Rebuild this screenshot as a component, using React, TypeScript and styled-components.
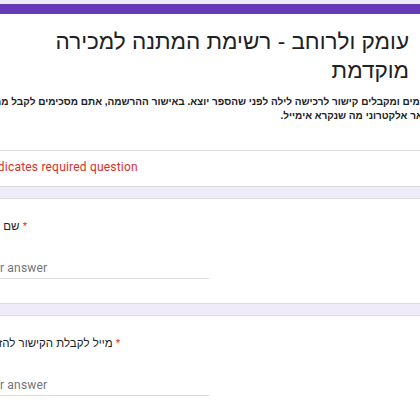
import React from 'react';
import styled, { createGlobalStyle } from 'styled-components';

const HEBREW = '"Liberation Sans", "DejaVu Sans", Arial, sans-serif';
const LATIN = 'Roboto, "Liberation Sans", Arial, sans-serif';

const GlobalStyle = createGlobalStyle`
  html, body {
    margin: 0;
    padding: 0;
    background: #f0ebf8;
    overflow: hidden;
  }
`;

const Page = styled.div`
  width: 420px;
  height: 420px;
  overflow: hidden;
  padding-top: 4px;
  box-sizing: border-box;
`;

// the form column is wider than the window, so both sides are cut
const FormColumn = styled.div`
  margin-left: -46px;
  width: 510px;
  display: flex;
  flex-direction: column;
  gap: 11px;
`;

const Card = styled.div`
  background: #ffffff;
  border: 1px solid #dadce0;
  border-radius: 8px;
  overflow: hidden;
`;

const HeaderCard = styled(Card)`
  border-top: none;
`;

const AccentBar = styled.div`
  height: 10px;
  background: #673ab7;
`;

const Title = styled.h1`
  margin: 0;
  padding: 13px 54px 0 24px;
  direction: rtl;
  text-align: right;
  white-space: nowrap;
  font-family: ${HEBREW};
  font-weight: 400;
  font-size: 22.5px;
  line-height: 29px;
  color: #202124;
`;

const Description = styled.div`
  margin-top: 10px;
  padding: 0 25px 0 24px;
  direction: rtl;
  text-align: right;
  white-space: nowrap;
  font-family: ${HEBREW};
  font-weight: 700;
  font-size: 10px;
  line-height: 14px;
  color: #202124;
`;

const Divider = styled.hr`
  margin: 27px 0 0;
  border: none;
  border-top: 1px solid #dadce0;
`;

const RequiredNote = styled.div`
  padding: 8px 24px 11px;
  font-family: ${LATIN};
  font-size: 12px;
  line-height: 16px;
  letter-spacing: 0.2px;
  color: #d93025;
`;

const QuestionCard = styled(Card)`
  padding: 18px 24px 24px;
  display: flex;
  flex-direction: column;
  gap: 25px;
`;

const Label = styled.div`
  font-family: ${HEBREW};
  font-size: 11.5px;
  line-height: 18px;
  color: #202124;
`;

const Star = styled.span`
  color: #d93025;
`;

const AnswerInput = styled.input`
  width: 50%;
  box-sizing: border-box;
  border: none;
  border-bottom: 1px solid #dadce0;
  outline: none;
  padding: 0 0 2px;
  background: transparent;
  font-family: ${LATIN};
  font-size: 12px;
  line-height: 16px;
  letter-spacing: 0.2px;
  color: #202124;

  &::placeholder {
    color: #70757a;
  }
`;

const questions = ['שם מלא', 'מייל לקבלת הקישור להזמנה'];

function Question({ label }: { label: string }) {
  return (
    <QuestionCard>
      <Label>
        {label}
        <Star> *</Star>
      </Label>
      <AnswerInput placeholder="Your answer" />
    </QuestionCard>
  );
}

export default function App() {
  return (
    <Page>
      <GlobalStyle />
      <FormColumn>
        <HeaderCard>
          <AccentBar />
          <Title>
            עומק ולרוחב - רשימת המתנה למכירה
            <br />
            מוקדמת
          </Title>
          <Description>
            נרשמים ומקבלים קישור לרכישה לילה לפני שהספר יוצא. באישור ההרשמה, אתם מסכימים לקבל ממנו עדכונים
            <br />
            בדואר אלקטרוני מה שנקרא אימייל.
          </Description>
          <Divider />
          <RequiredNote>* Indicates required question</RequiredNote>
        </HeaderCard>
        {questions.map((q) => (
          <Question key={q} label={q} />
        ))}
      </FormColumn>
    </Page>
  );
}
